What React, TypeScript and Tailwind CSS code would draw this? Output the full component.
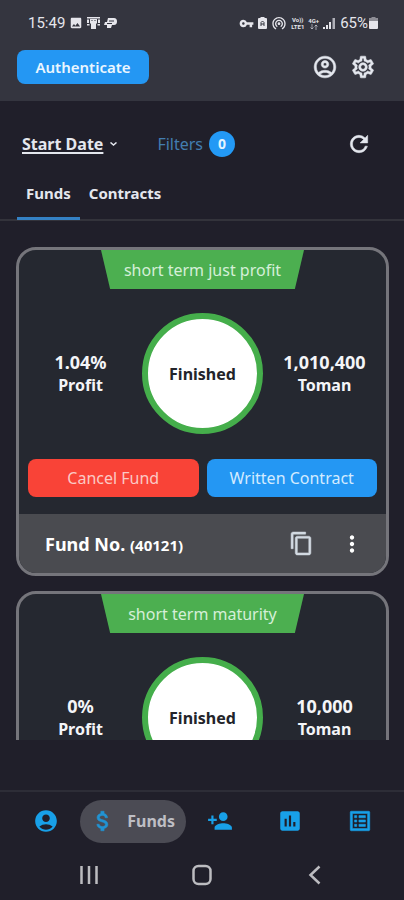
import { useState } from "react";
import {
  MdAccountCircle,
  MdAssessment,
  MdAttachMoney,
  MdContentCopy,
  MdImage,
  MdListAlt,
  MdMoreVert,
  MdOutlineAccountCircle,
  MdOutlineSettings,
  MdPersonAdd,
  MdRefresh,
  MdVpnKey,
  MdWifiTethering,
} from "react-icons/md";

type Fund = {
  id: number;
  plan: string;
  status: string;
  profit: string;
  amount: string;
};

const funds: Fund[] = [
  { id: 40121, plan: "short term just profit", status: "Finished", profit: "1.04%", amount: "1,010,400" },
  { id: 40120, plan: "short term maturity", status: "Finished", profit: "0%", amount: "10,000" },
];

// Thickens an icon's strokes, leaving its empty bounding path alone.
const boldIcon = "stroke-current stroke-[0.5] [&>path[fill=none]]:stroke-none";

function StatusBar() {
  return (
    <div className="flex h-[46px] items-center justify-between pr-[26px] pl-7 font-[Roboto,sans-serif] text-[#e6e6ec]">
      <div className="flex items-center gap-1">
        <span className="text-[15px] leading-5">15:49</span>
        <MdImage className="size-[14px]" />
        <svg className="h-3 w-[13px]" viewBox="0 0 13 12" fill="currentColor">
          <path d="M0 0h13v1.500H0zM0 2.500h2V6H0zM11 2.500h2V6h-2zM0 7h2.500v1.500H0zM10.500 7H13v1.500h-2.500z" />
          <path d="M3 2h7v4L9 7v5H4V7L3 6z" />
          <path d="M4.500 3.500h1M7.500 3.500h1" stroke="#33343e" />
        </svg>
        <svg className="h-3 w-[13px]" viewBox="0 0 13 12" fill="currentColor">
          <path d="M4 1h6c2 0 3 1.500 3 3.500S12 8 10 8H8l-1 3H3V8H0l1-3h2z" />
          <path d="M5 4h5M3 6.500h5" stroke="#33343e" />
        </svg>
      </div>
      <div className="flex items-center gap-1">
        <MdVpnKey className="size-[15px]" />
        <svg className="h-3 w-[9px]" viewBox="0 0 9 12" fill="currentColor">
          <path d="M2.500 0h4v1H8a1 1 0 0 1 1 1v9a1 1 0 0 1-1 1H1a1 1 0 0 1-1-1V2a1 1 0 0 1 1-1h1.500z" />
          <path d="M3 9V5.500L4.500 4 6 5.500V9M3 7h3" fill="none" stroke="#33343e" />
        </svg>
        <MdWifiTethering className="size-4" />
        <span className="flex flex-col text-center text-[6px] leading-[7px] font-bold">
          <span>Vo))</span>
          <span>LTE1</span>
        </span>
        <span className="flex flex-col items-center text-[6px] leading-[7px] font-bold">
          <span>4G+</span>
          <svg className="h-[6px] w-2" viewBox="0 0 8 6" stroke="currentColor" fill="none">
            <path d="M2 0v5M0.500 3.500 2 5l1.500-1.500M6 6V1M4.500 2.500 6 1l1.500 1.500" opacity=".6" />
          </svg>
        </span>
        <svg className="h-[11px] w-3" viewBox="0 0 12 11" fill="currentColor">
          <path d="M0 9h2v2H0zM3 7h2v4H3zM6 4h2v7H6z" />
          <path d="M9.500 0H12v11H9.500z" opacity=".7" />
        </svg>
        <span className="ml-px flex items-center gap-px text-[15px] leading-5">
          65%
          <svg className="h-3 w-[9px]" viewBox="0 0 9 12" fill="currentColor">
            <path d="M2.500 0h4v1H9v4H0V1h2.500z" opacity=".5" />
            <path d="M0 4h9v7a1 1 0 0 1-1 1H1a1 1 0 0 1-1-1z" />
          </svg>
        </span>
      </div>
    </div>
  );
}

function FundCard({ fund }: { fund: Fund }) {
  return (
    <article className="shrink-0 overflow-hidden rounded-[20px] border-[3px] border-[#75757b] bg-[#252830]">
      <h2 className="mx-auto flex h-[39px] w-[203px] items-center justify-center bg-[#4caf50] text-base font-normal text-[#d5efd8] [clip-path:polygon(0_0,100%_0,95.500%_100%,4.500%_100%)]">
        {fund.plan}
      </h2>
      <div className="mt-6 grid grid-cols-[1fr_121px_1fr] items-center text-center text-base leading-[22px] font-bold text-[#f4f5f8]">
        <p>
          <span className="text-lg leading-[22px]">{fund.profit}</span>
          <br />
          Profit
        </p>
        <div className="flex size-[121px] items-center justify-center rounded-full border-[6px] border-[#45ae4b] bg-white text-[#23242a]">
          {fund.status}
        </div>
        <p>
          <span className="text-lg leading-[22px]">{fund.amount}</span>
          <br />
          Toman
        </p>
      </div>
      <div className="mt-[25px] grid grid-cols-2 gap-2 px-[9px] text-base">
        <button className="h-[38px] rounded-lg bg-[#f94337] text-[#fbc9c5]" type="button">
          Cancel Fund
        </button>
        <button className="h-[38px] rounded-lg bg-[#2497f3] text-[#d3ebff]" type="button">
          Written Contract
        </button>
      </div>
      <footer className="mt-[17px] flex h-[59px] items-center bg-[#4a4b50] pr-[21px] pl-[26px] text-white">
        <p className="flex-1 text-lg font-bold">
          Fund No. <span className="text-[15px]">({fund.id})</span>
        </p>
        <button aria-label="Copy fund number" className="text-[#d3dae2]" type="button">
          <MdContentCopy className={`size-[25px] ${boldIcon}`} />
        </button>
        <button aria-label="More actions" className="ml-[25px]" type="button">
          <MdMoreVert className="size-[26px]" />
        </button>
      </footer>
    </article>
  );
}

export default function App() {
  const [tab, setTab] = useState("Funds");

  return (
    <div className="flex h-screen flex-col bg-[#201f2a] font-['Noto_Sans','Open_Sans',sans-serif] text-[#e4e7ee]">
      <header className="h-[101px] shrink-0 bg-[#34353f]">
        <StatusBar />
        <div className="flex items-center gap-3 pt-1 pr-7 pl-[17px]">
          <button className="h-[34px] w-[132px] rounded-lg bg-[#2497f3] text-[15px] font-semibold text-[#eaf6ff]" type="button">
            Authenticate
          </button>
          <button aria-label="Account" className="ml-auto" type="button">
            <MdOutlineAccountCircle className={`size-[26px] ${boldIcon}`} />
          </button>
          <button aria-label="Settings" type="button">
            <MdOutlineSettings className={`size-[26px] ${boldIcon}`} />
          </button>
        </div>
      </header>

      <div className="mt-[29px] flex h-7 shrink-0 items-center pr-8 pl-[22px] text-base">
        <button className="flex items-center gap-[7px] font-bold" type="button">
          <span className="underline decoration-2 underline-offset-2">Start Date</span>
          <svg className="h-1 w-[7px]" viewBox="0 0 7 4" fill="none" stroke="currentColor" strokeWidth="1.500">
            <path d="M.5.5l3 2.500 3-2.500" />
          </svg>
        </button>
        <button className="ml-10 flex items-center gap-1.5 text-[#437db0]" type="button">
          Filters
          <span className="flex size-[26px] items-center justify-center rounded-full bg-[#2399f5] text-sm font-bold text-[#e4f4ff]">
            0
          </span>
        </button>
        <button aria-label="Refresh" className="ml-auto" type="button">
          <MdRefresh className={`size-[26px] ${boldIcon}`} />
        </button>
      </div>

      <nav className="mt-[11px] flex h-[52px] shrink-0 border-b-2 border-[#33333b] pl-[17px] text-[15px] font-bold">
        {["Funds", "Contracts"].map((name) => (
          <button
            className={`-mb-px border-b-[3px] px-[9px] ${tab === name ? "border-[#3481c4]" : "border-transparent"}`}
            key={name}
            type="button"
            onClick={() => setTab(name)}
          >
            {name}
          </button>
        ))}
      </nav>

      <main className="mt-[26px] mr-[15px] ml-4 flex min-h-0 flex-1 flex-col gap-[15px] overflow-hidden">
        {funds.map((fund) => (
          <FundCard fund={fund} key={fund.id} />
        ))}
      </main>

      <nav className="mt-[50px] flex h-[60px] shrink-0 items-center justify-between border-t-2 border-[#2d2d37] pr-[31px] pl-[33px] text-[#18a0e8]">
        <div className="flex items-center gap-[21px]">
          <a aria-label="Profile" href="#profile">
            <MdAccountCircle className="size-[26px]" />
          </a>
          <a
            className="flex h-[43px] w-[106px] items-center justify-between rounded-full bg-[#4b4b54] pr-[11px] pl-[10px] text-base font-bold text-[#bebec4]"
            href="#funds"
          >
            <MdAttachMoney className={`size-[26px] text-[#2193d3] ${boldIcon}`} />
            Funds
          </a>
          <a aria-label="Invite" href="#invite">
            <MdPersonAdd className="size-[26px]" />
          </a>
        </div>
        <div className="flex items-center gap-11">
          <a aria-label="Reports" href="#reports">
            <MdAssessment className="size-[26px]" />
          </a>
          <a aria-label="List" href="#list">
            <MdListAlt className={`size-[26px] ${boldIcon}`} />
          </a>
        </div>
      </nav>

      <div className="flex h-[50px] shrink-0 items-center justify-between px-[77px] text-[#bcbcc0]">
        <button aria-label="Recent apps" type="button">
          <svg className="size-6" viewBox="0 0 24 24" stroke="currentColor" strokeWidth="2.500">
            <path d="M4.500 3v18M12 3v18M19.500 3v18" />
          </svg>
        </button>
        <button aria-label="Home" type="button">
          <svg className="size-6" viewBox="0 0 24 24" fill="none" stroke="currentColor" strokeWidth="2.500">
            <rect x="3.500" y="3" width="17" height="18" rx="5" />
          </svg>
        </button>
        <button aria-label="Back" type="button">
          <svg className="size-6" viewBox="0 0 24 24" fill="none" stroke="currentColor" strokeWidth="2.500">
            <path d="M16.500 3.500 7.500 12l9 8.500" />
          </svg>
        </button>
      </div>
    </div>
  );
}
